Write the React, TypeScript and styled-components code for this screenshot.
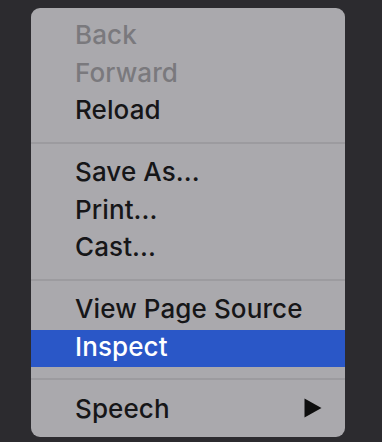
import React from "react";
import styled, { createGlobalStyle } from "styled-components";

const Global = createGlobalStyle`
  html, body { margin: 0; padding: 0; background: #2c2b2f; }
  body { width: 382px; height: 442px; overflow: hidden; }
`;

const Page = styled.div`
  width: 382px;
  height: 442px;
  background: #2c2b2f;
  padding: 8px 0 0 31px;
  box-sizing: border-box;
`;

const Menu = styled.div`
  width: 314px;
  height: 429px;
  box-sizing: border-box;
  background: #aaa9ad;
  border-radius: 9px;
  padding-top: 10px;
  display: flex;
  flex-direction: column;
  font-family: Inter, "Liberation Sans", sans-serif;
  overflow: hidden;
`;

const Item = styled.div<{ $disabled?: boolean; $active?: boolean }>`
  height: 37.5px;
  flex: none;
  display: flex;
  align-items: center;
  justify-content: space-between;
  padding: 0 23px 4px 44px;
  box-sizing: border-box;
  font-size: 26px;
  font-weight: 500;
  letter-spacing: 0.1px;
  color: ${(p) => (p.$active ? "#ffffff" : p.$disabled ? "#7a797d" : "#161618")};
  background: ${(p) => (p.$active ? "#2a57c7" : "transparent")};
`;

const Separator = styled.div`
  height: 24.5px;
  flex: none;
  display: flex;
  align-items: center;
  &::after {
    content: "";
    display: block;
    width: 100%;
    height: 2px;
    background: #9c9b9f;
  }
`;

const Arrow = () => (
  <svg width="18" height="20" viewBox="0 0 18 20">
    <path d="M0.5 0.5 L17.5 10 L0.5 19.5 Z" fill="#0e0e0e" />
  </svg>
);

export default function App() {
  return (
    <>
      <Global />
      <Page>
        <Menu>
          <Item $disabled>Back</Item>
          <Item $disabled>Forward</Item>
          <Item>Reload</Item>
          <Separator />
          <Item>Save As...</Item>
          <Item>Print...</Item>
          <Item>Cast...</Item>
          <Separator />
          <Item>View Page Source</Item>
          <Item $active>Inspect</Item>
          <Separator />
          <Item>
            Speech
            <Arrow />
          </Item>
        </Menu>
      </Page>
    </>
  );
}
